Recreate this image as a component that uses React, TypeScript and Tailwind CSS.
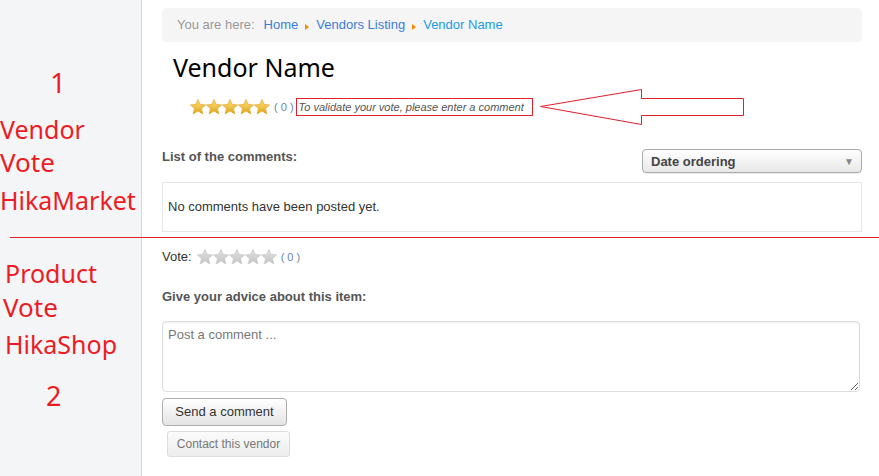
import React from "react";

const Star = ({ gold }: { gold: boolean }) => (
  <svg width="16" height="16" viewBox="0 0 16 16" className="block">
    <defs>
      <linearGradient id={gold ? "g1" : "g2"} x1="0" y1="0" x2="0" y2="1">
        <stop offset="0" stopColor={gold ? "#ffe27a" : "#e2e2e2"} />
        <stop offset="1" stopColor={gold ? "#e2a51a" : "#c4c4c4"} />
      </linearGradient>
    </defs>
    <path
      d="M8 0.5 L10.2 5.4 L15.6 5.9 L11.5 9.4 L12.8 14.9 L8 12 L3.2 14.9 L4.5 9.4 L0.4 5.9 L5.8 5.4 Z"
      fill={`url(#${gold ? "g1" : "g2"})`}
      stroke={gold ? "#d79b12" : "#c0c0c0"}
      strokeWidth="0.6"
      strokeLinejoin="round"
    />
  </svg>
);

const Stars = ({ gold }: { gold: boolean }) => (
  <div className="flex">
    {[0, 1, 2, 3, 4].map((i) => (
      <Star key={i} gold={gold} />
    ))}
  </div>
);

const Tri = () => (
  <span className="inline-block w-0 h-0 border-y-[3px] border-y-transparent border-l-[4px] border-l-[#f08a00] mx-[7px] translate-y-[2px]" />
);

export default function App() {
  return (
    <div className="relative w-[879px] h-[476px] overflow-hidden bg-white flex">
      {/* Sidebar with annotations */}
      <div className="w-[142px] shrink-0 bg-[#f4f5f7] border-r border-[#d6d6d6] flex flex-col text-[#ec1c24] font-['Noto_Sans',sans-serif]">
        <div className="mt-[66px] pl-[50px] text-[28px] leading-[32px]">1</div>
        <div className="mt-[17px] text-[25px] leading-[28px]">Vendor</div>
        <div className="mt-[5px] text-[26px] leading-[28px]">Vote</div>
        <div className="mt-[10px] text-[25px] leading-[28px]">HikaMarket</div>
        <div className="mt-[45px] pl-[5px] text-[25px] leading-[28px]">Product</div>
        <div className="mt-[6px] pl-[3px] text-[26px] leading-[28px]">Vote</div>
        <div className="mt-[9px] pl-[5px] text-[25px] leading-[28px]">HikaShop</div>
        <div className="mt-[22px] pl-[46px] text-[27px] leading-[32px]">2</div>
      </div>

      {/* Main */}
      <div className="flex-1 pl-[20px] pr-[17px] pt-[8px] flex flex-col text-[13px] text-[#333] font-['Liberation_Sans',Arial,sans-serif]">
        <div className="h-[34px] rounded-[4px] bg-[#f5f5f5] flex items-center pl-[15px] leading-[16px]">
          <span className="text-[#999]">You are here:</span>
          <span className="ml-[9px] text-[#3b7dd8]">Home</span>
          <Tri />
          <span className="text-[#3b7dd8]">Vendors Listing</span>
          <Tri />
          <span className="text-[#1a9be6]">Vendor Name</span>
        </div>

        <h1 className="mt-[9px] ml-[11px] text-[25px] leading-[32px] text-black font-['Noto_Sans',sans-serif]">
          Vendor Name
        </h1>

        <div className="mt-[15px] ml-[28px] h-[18px] flex items-center">
          <Stars gold />
          <span className="ml-[4px] text-[11px] text-[#6b86a8]">( 0 )</span>
          <span className="ml-[2px] h-[18px] w-[237px] border border-[#e0202a] flex items-center pl-[2px] text-[11px] italic text-[#555]">
            To validate your vote, please enter a comment
          </span>
        </div>

        <div className="mt-[32px] flex items-start justify-between">
          <span className="font-bold text-[#555] leading-[16px] pt-[1px]">List of the comments:</span>
          <div className="mt-[1px] w-[220px] h-[24px] rounded-[4px] border border-[#aaa] bg-gradient-to-b from-white to-[#e8e8e8] shadow-[0_1px_1px_rgba(0,0,0,0.08)] flex items-center justify-between pl-[8px] pr-[7px]">
            <span className="font-bold text-[#444] pt-[1px]">Date ordering</span>
            <span className="text-[10px] text-[#888]">▼</span>
          </div>
        </div>

        <div className="mt-[9px] h-[50px] border border-[#e6e6e6] flex items-center pl-[5px]">
          No comments have been posted yet.
        </div>

        <div className="mt-[16px] h-[18px] flex items-center">
          <span>Vote:</span>
          <span className="ml-[5px]">
            <Stars gold={false} />
          </span>
          <span className="ml-[4px] text-[11px] text-[#6b86a8]">( 0 )</span>
        </div>

        <div className="mt-[23px] font-bold text-[#555] leading-[16px]">Give your advice about this item:</div>

        <textarea
          className="mt-[16px] w-[698px] h-[71px] rounded-[4px] border border-[#ddd] shadow-[inset_0_1px_2px_rgba(0,0,0,0.06)] pl-[5px] pt-[5px] text-[13px] leading-[16px] placeholder:text-[#777] outline-none"
          placeholder="Post a comment ..."
        />

        <button className="mt-[6px] w-[125px] h-[28px] rounded-[4px] border border-[#adadad] bg-gradient-to-b from-white to-[#e4e4e4] text-[#333] text-[13px]">
          Send a comment
        </button>
        <button className="mt-[5px] ml-[5px] w-[123px] h-[26px] rounded-[3px] border border-[#ddd] bg-gradient-to-b from-[#fbfbfb] to-[#ededed] text-[#777] text-[12px]">
          Contact this vendor
        </button>
      </div>

      {/* Annotation line */}
      <div className="absolute left-[10px] right-0 top-[237px] h-[1px] bg-[#e0202a]" />

      {/* Annotation arrow */}
      <svg className="absolute left-0 top-0" width="879" height="476" viewBox="0 0 879 476">
        <polygon
          points="540.5,106.5 641.5,89.5 641.5,98.5 743.5,98.5 743.5,115.5 641.5,115.5 641.5,124.5"
          fill="none"
          stroke="#e0202a"
          strokeWidth="1"
        />
      </svg>
    </div>
  );
}
